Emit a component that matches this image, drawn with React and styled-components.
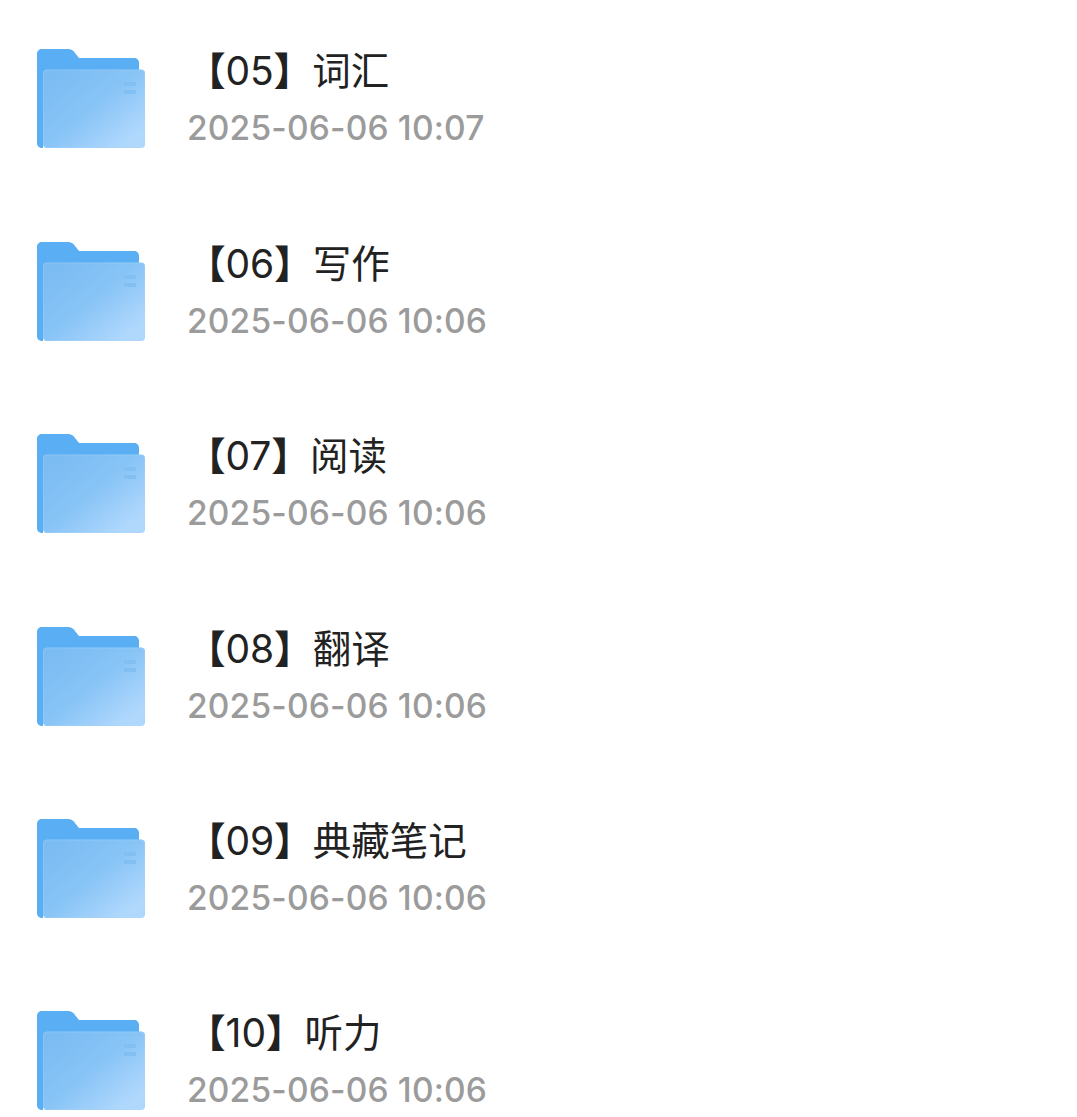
import React from 'react';
import styled, { createGlobalStyle } from 'styled-components';

const GlobalStyle = createGlobalStyle`
  html, body {
    margin: 0;
    padding: 0;
    background: #fff;
    overflow: hidden;
  }
  body {
    font-family: Inter, "Noto Sans CJK SC", sans-serif;
  }
`;

const List = styled.div`
  display: flex;
  flex-direction: column;
  gap: 93.4px;
  padding: 49.4px 0 0 37px;
  height: 1068px;
  overflow: hidden;
`;

const Row = styled.div`
  display: flex;
  align-items: flex-start;
  gap: 43px;
  height: 99px;
`;

const Icon = styled.svg`
  width: 108px;
  height: 99px;
  flex: none;
  display: block;
`;

const Texts = styled.div`
  display: flex;
  flex-direction: column;
  gap: 11px;
  margin-top: -2px;
`;

const Title = styled.div`
  font-size: 38.5px;
  line-height: 48px;
  color: #222222;
  white-space: nowrap;
`;

const Bracket = styled.span`
  font-weight: 900;
  margin-left: ${(p) => (p.$open ? '-1px' : '0')};
`;

const Num = styled.span`
  font-size: 39px;
  letter-spacing: 0;
`;

const Time = styled.div`
  font-size: 33.5px;
  font-weight: 500;
  letter-spacing: 0.17px;
  line-height: 44px;
  color: #9b9b9b;
  white-space: nowrap;
  margin-left: -1px;
`;

const rows = [
  { num: '05', name: '词汇', time: '2025-06-06 10:07' },
  { num: '06', name: '写作', time: '2025-06-06 10:06' },
  { num: '07', name: '阅读', time: '2025-06-06 10:06' },
  { num: '08', name: '翻译', time: '2025-06-06 10:06' },
  { num: '09', name: '典藏笔记', time: '2025-06-06 10:06' },
  { num: '10', name: '听力', time: '2025-06-06 10:06' },
];

const FolderIcon = ({ id }) => (
  <Icon viewBox="0 0 108 99">
    <defs>
      <linearGradient id={`front-${id}`} x1="0.1" y1="0.1" x2="0.9" y2="0.85">
        <stop offset="0" stopColor="#7bbcf3" />
        <stop offset="0.5" stopColor="#88c4f6" />
        <stop offset="1" stopColor="#b0d8fd" />
      </linearGradient>
    </defs>
    <path
      d="M5 0H31C34 0 36 1 38 4L42 9H97C100 9 102 11 102 14V60H6V99C2 99 0 97 0 94V5C0 2 2 0 5 0Z"
      fill="#5aaef4"
    />
    <rect x="6" y="20.5" width="102" height="78.5" rx="4" fill={`url(#front-${id})`} />
    <rect x="6.5" y="21" width="101" height="77.5" rx="3.5" fill="none" stroke="#a6d3f8" strokeOpacity="0.35" />
    <rect x="87" y="33" width="12" height="4" fill="#82c0f3" />
    <rect x="87" y="41" width="12" height="4" fill="#82c0f3" />
  </Icon>
);

export default function App() {
  return (
    <>
      <GlobalStyle />
      <List>
        {rows.map((row) => (
          <Row key={row.num}>
            <FolderIcon id={row.num} />
            <Texts>
              <Title>
                <Bracket $open>【</Bracket>
                <Num>{row.num}</Num>
                <Bracket>】</Bracket>
                {row.name}
              </Title>
              <Time>{row.time}</Time>
            </Texts>
          </Row>
        ))}
      </List>
    </>
  );
}
